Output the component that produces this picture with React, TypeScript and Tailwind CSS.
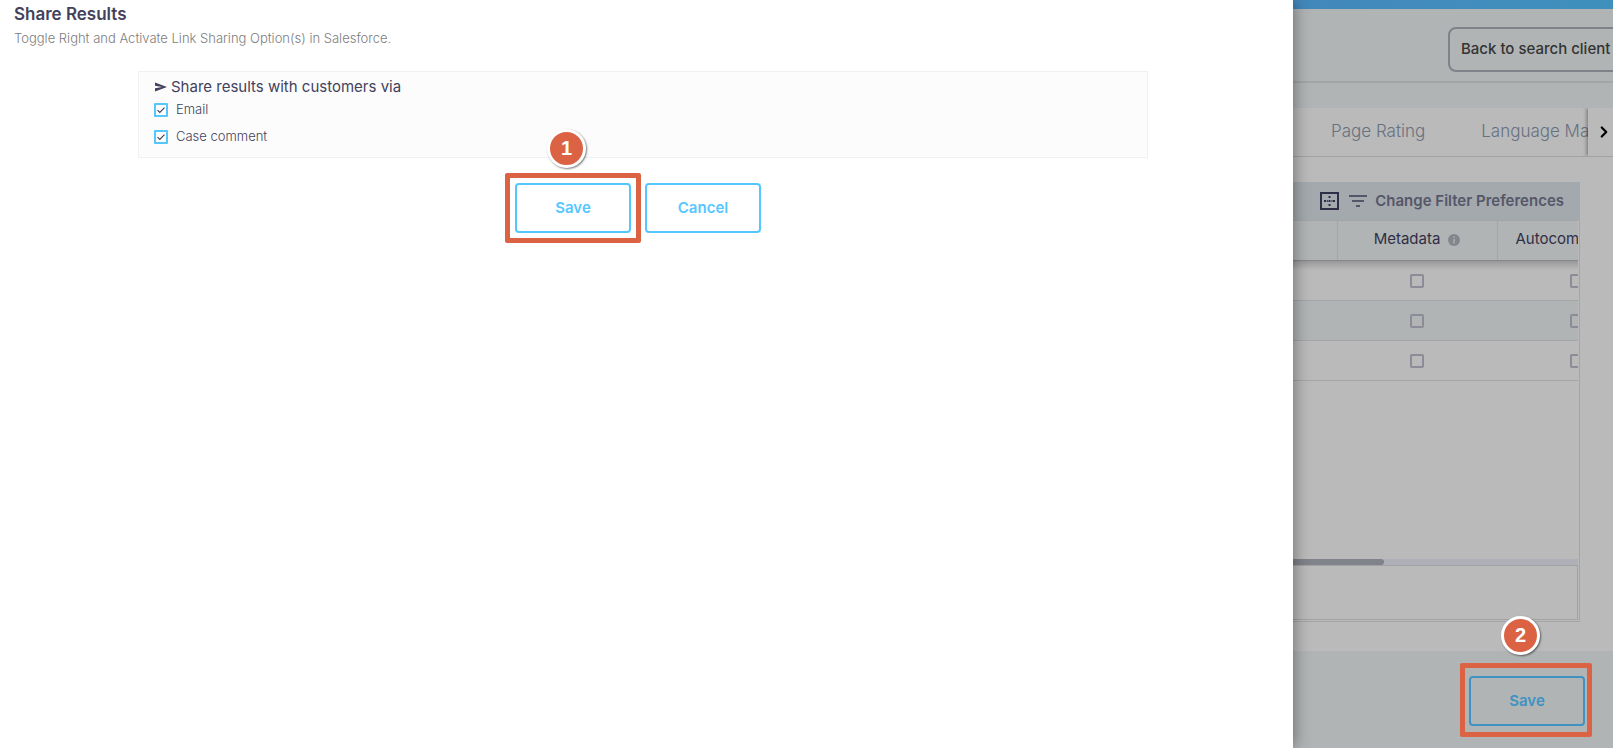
import React from "react";
import { FiChevronRight } from "react-icons/fi";

type ShareOptionProps = {
  id: string;
  label: string;
};

type StepProps = {
  step: number;
  className: string;
};

const StepBadge = ({ step, className }: StepProps) => (
  <span
    className={`absolute flex h-[39px] w-[39px] items-center justify-center rounded-full border-[3px] border-white bg-[#db6344] pb-[2px] font-['Liberation_Sans',sans-serif] text-xl font-bold text-white shadow-[1px_1px_2px_rgba(0,0,0,0.5)] ${className}`}
  >
    {step}
  </span>
);

const ShareOption = ({ id, label }: ShareOptionProps) => (
  <div className="flex h-[27px] items-center">
    <span className="relative h-[14px] w-[14px]">
      <input
        id={id}
        type="checkbox"
        defaultChecked
        className="block h-[14px] w-[14px] appearance-none rounded-[1px] border-2 border-[#55c7ff] bg-white"
      />
      <svg
        viewBox="0 0 14 14"
        className="pointer-events-none absolute inset-0 h-[14px] w-[14px]"
        fill="none"
        stroke="#43425d"
        strokeWidth="1.2"
      >
        <path d="M3.5 7.2 L5.8 9.5 L10.5 4.6" />
      </svg>
    </span>
    <label htmlFor={id} className="pl-2 text-[13px] font-light text-[#43425d]">
      {label}
    </label>
  </div>
);

const ShareDrawer = () => {
  return (
    <section className="relative z-10 min-w-0 flex-1 bg-white shadow-[0_0_16px_rgba(0,0,0,0.45)]">
      <div className="px-[14px] pt-[3px]">
        <h1 className="text-[17px] leading-[22px] font-semibold text-[#43425d]">
          Share Results
        </h1>
        <p className="pt-[3px] text-[13px] leading-5 font-light text-[#7d7d7d]">
          Toggle Right and Activate Link Sharing Option(s) in Salesforce.
        </p>
      </div>

      <div className="mt-[23px] mr-[145px] ml-[138px] border border-[#f1f1f1] bg-[#fcfcfc] px-[15px] pt-1 pb-[7px]">
        <h2 className="flex items-center gap-1 text-[15px] leading-[22px] text-[#43425d]">
          <svg viewBox="0 0 13 10" className="h-[10px] w-[13px]" fill="#43425d">
            <path d="M1 0.5 L13 5 L1 9.5 L1 6.2 L8 5 L1 3.8 Z" />
          </svg>
          Share results with customers via
        </h2>
        <div className="-mt-[2px]">
          <ShareOption id="share-email" label="Email" />
          <ShareOption id="share-comment" label="Case comment" />
        </div>
      </div>

      <div className="flex justify-center gap-[14px] pt-[25px] pr-[17px]">
        <div className="relative">
          <button className="block h-[50px] w-[116px] rounded border-2 border-[#55c7ff] bg-white text-[15px] font-semibold text-[#55c7ff]">
            Save
          </button>
          <span className="pointer-events-none absolute -top-[10px] -right-[10px] -bottom-[10px] -left-[10px] rounded-xs border-[5px] border-[#db6344]" />
          <StepBadge step={1} className="-top-[54px] left-[32px]" />
        </div>
        <button className="h-[50px] w-[116px] rounded border-2 border-[#55c7ff] bg-white text-[15px] font-semibold text-[#55c7ff]">
          Cancel
        </button>
      </div>
    </section>
  );
};

const EmptyCheckbox = ({ label }: { label: string }) => (
  <input
    type="checkbox"
    aria-label={label}
    className="mx-auto block h-[14px] w-[14px] appearance-none rounded-[2px] border-2 border-[#8c8b97]"
  />
);

const FilterTable = () => {
  const rows = ["bg-[#bababa]", "bg-[#b0b4b5]", "bg-[#bababa]"];

  return (
    <div className="mt-[25px] mr-[33px] mb-[29px] flex flex-1 flex-col border-r border-b border-[#a3a6a9]">
      <div className="-mr-px flex h-[38px] items-center justify-end bg-[#a3a9ad] pr-[16px]">
        <button aria-label="Table borders" className="pr-[10px]">
          <svg viewBox="0 0 19 18" className="h-[18px] w-[19px]" fill="#2f2e46">
            <path
              fillRule="evenodd"
              d="M0 0H19V18H0Z M2 2V16H17V2Z"
            />
            <path d="M8.5 4h2v2h-2z M8.5 8h2v2h-2z M8.5 12h2v2h-2z M4 8h2v2h-2z M6.8 8h1v2h-1z M11.5 8h1v2h-1z M13 8h2v2h-2z" />
          </svg>
        </button>
        <button className="flex items-center gap-2 text-[15px] font-semibold text-[#555769]">
          <svg viewBox="0 0 18 12" className="h-3 w-[18px]" fill="#555769">
            <path d="M0 0H18V2H0Z M3 5H15V7H3Z M7 10H11V12H7Z" />
          </svg>
          Change Filter Preferences
        </button>
      </div>

      <div className="relative mr-px overflow-hidden">
        <table className="w-[364px] table-fixed border-collapse text-[15px] text-[#2f2e46]">
          <colgroup>
            <col className="w-11" />
            <col className="w-40" />
            <col className="w-40" />
          </colgroup>
          <thead>
            <tr className="h-10 border-y border-[#a3a6a9] bg-[#b0b4b5]">
              <th className="border-r border-[#a3a6a9]" />
              <th className="border-r border-[#a3a6a9] p-0 pb-[2px] font-normal">
                <span className="flex items-center justify-center gap-2">
                  Metadata
                  <svg viewBox="0 0 12 12" className="h-3 w-3">
                    <circle cx="6" cy="6" r="6" fill="#85868d" />
                    <path d="M5.3 2.6h1.4v1.4H5.3z M5.3 5h1.4v4.4H5.3z" fill="#b0b4b5" />
                  </svg>
                </span>
              </th>
              <th className="p-0 pb-[2px] pl-[18px] text-left font-normal">
                Autocomplete
              </th>
            </tr>
          </thead>
          <tbody>
            {rows.map((row, index) => (
              <tr key={index} className={`h-10 border-b border-[#a3a6a9] ${row}`}>
                <td />
                <td className="p-0">
                  <EmptyCheckbox label={`Metadata ${index + 1}`} />
                </td>
                <td className="p-0">
                  <EmptyCheckbox label={`Autocomplete ${index + 1}`} />
                </td>
              </tr>
            ))}
          </tbody>
        </table>
        <span className="pointer-events-none absolute top-10 left-0 h-[10px] w-full bg-linear-to-b from-black/20 to-transparent" />
      </div>

      <div className="mt-auto mr-px">
        <div className="h-[6px] bg-[#afb0b7]">
          <div className="h-full w-[91px] rounded-r-full bg-[#808389]" />
        </div>
        <div className="mb-px h-[55px] border-y border-r border-[#a0a2a3]" />
      </div>
    </div>
  );
};

const AdminPage = () => {
  return (
    <main className="flex w-80 shrink-0 flex-col overflow-hidden bg-[#bababa]">
      <div className="h-[9px] bg-linear-to-r from-[#4388bb] to-[#3f90bd]" />
      <header className="flex h-[74px] items-start border-b-2 border-[#a2a6a7] bg-[#b0b4b5] pt-[18px]">
        <button className="ml-[155px] h-[45px] w-44 shrink-0 rounded-lg border-2 border-[#808289] pl-[11px] text-left text-[15px] font-medium whitespace-nowrap text-[#333333]">
          Back to search client
        </button>
      </header>
      <div className="h-[25px] bg-[#b0b4b5]" />

      <nav className="flex h-[49px] overflow-hidden border-b border-[#a0a2a3] text-[17px] text-[#667180]">
        <div className="flex flex-1 items-center gap-14 overflow-hidden pl-[38px] font-light whitespace-nowrap">
          <a href="#page-rating">Page Rating</a>
          <a href="#language">Language Manager</a>
        </div>
        <button
          aria-label="Next tabs"
          className="flex w-[25px] shrink-0 items-center justify-end shadow-[-1px_0_4px_rgba(0,0,0,0.4)]"
        >
          <FiChevronRight className="text-lg text-black" strokeWidth={3} />
        </button>
      </nav>

      <FilterTable />

      <footer className="flex h-[97px] justify-end bg-[#b0b4b5] pt-[25px] pr-7">
        <div className="relative h-[50px]">
          <button className="block h-[50px] w-[116px] rounded border-2 border-[#3f92c1] text-[15px] font-semibold text-[#3f92c1]">
            Save
          </button>
          <span className="pointer-events-none absolute -top-[13px] -right-[7px] -bottom-[11px] -left-[9px] rounded-xs border-[5px] border-[#db6344]" />
          <StepBadge step={2} className="-top-[60px] left-[32px]" />
        </div>
      </footer>
    </main>
  );
};

const App = () => {
  return (
    <div className="flex min-h-screen overflow-hidden bg-white font-['Inter',sans-serif]">
      <ShareDrawer />
      <AdminPage />
    </div>
  );
};

export default App;
